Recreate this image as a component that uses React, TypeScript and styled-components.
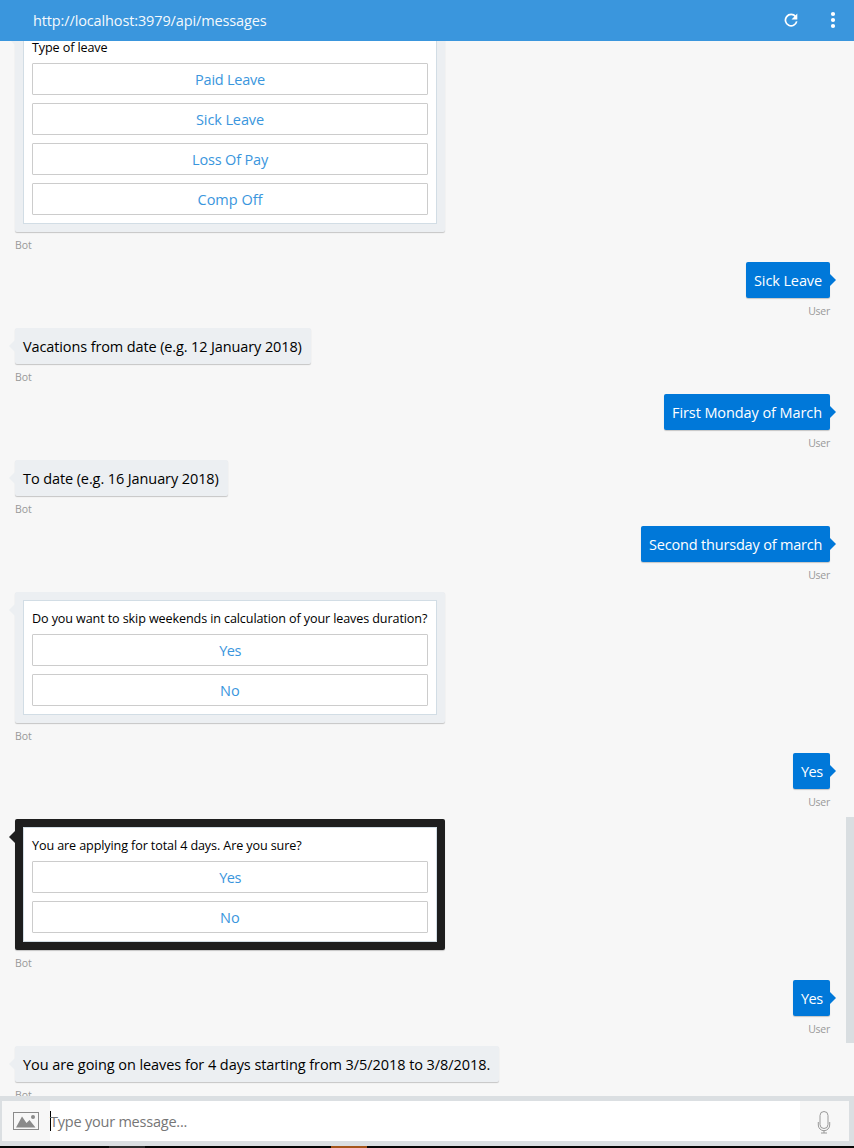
import React from 'react';
import styled, { createGlobalStyle, css } from 'styled-components';

const GlobalStyle = createGlobalStyle`
  * { box-sizing: border-box; }
  body { margin: 0; background: #f7f7f7; }
`;

const Page = styled.div`
  display: flex;
  flex-direction: column;
  height: 1148px;
  overflow: hidden;
  background: #f7f7f7;
  font-family: 'Open Sans', 'Noto Sans', sans-serif;
  font-size: 14.5px;
  color: #000;
`;

const Header = styled.header`
  display: flex;
  flex: 0 0 41px;
  align-items: center;
  padding: 0 16px 2px 33px;
  background: #3a96dd;
  color: #fff;
`;

const Address = styled.div`
  flex: 1;
  padding-top: 2px;
  letter-spacing: -0.126px;
  line-height: 20px;
  opacity: 0.95;
`;

const HeaderButton = styled.button`
  display: flex;
  padding: 0;
  border: 0;
  margin-left: 30px;
  background: none;
  color: inherit;
`;

const Conversation = styled.main`
  display: flex;
  flex: 1;
  min-height: 0;
  overflow: hidden;
`;

const MessageList = styled.div`
  display: flex;
  flex: 1;
  flex-direction: column;
  gap: 12px;
  padding: 0 16px 0 15px;
  margin-top: -20px;
`;

const ScrollTrack = styled.div`
  flex: 0 0 8px;
  padding-top: 776px;
`;

const ScrollThumb = styled.div`
  height: 226px;
  background: #d9dee1;
`;

const Message = styled.div<{ $mine?: boolean }>`
  display: flex;
  flex: none;
  flex-direction: column;
  align-items: ${(p) => (p.$mine ? 'flex-end' : 'flex-start')};
`;

const tones = {
  bot: '#eceff2',
  user: '#0078d9',
  selected: '#1e1e1e',
};

const Bubble = styled.div<{ $tone: keyof typeof tones; $width: number }>`
  position: relative;
  width: ${(p) => p.$width}px;
  padding: 8px;
  border-radius: 2px;
  background: ${(p) => tones[p.$tone]};
  color: ${(p) => (p.$tone === 'user' ? '#fff' : '#000')};
  box-shadow: 0 1px 1px rgba(0, 0, 0, 0.2);

  &::after {
    content: '';
    position: absolute;
    top: 12px;
    border: 6px solid transparent;
    ${(p) =>
      p.$tone === 'user'
        ? css`left: 100%; border-right-width: 0; border-left-color: ${tones.user};`
        : css`right: 100%; border-left-width: 0; border-right-color: ${tones[p.$tone]};`}
  }
`;

const Line = styled.div<{ $spacing: number }>`
  padding-top: 1px;
  line-height: 20px;
  margin-bottom: -1px;
  letter-spacing: ${(p) => p.$spacing}px;
  white-space: nowrap;
`;

const Sender = styled.div<{ $mine?: boolean }>`
  height: 18px;
  padding-top: 5px;
  color: #999;
  font-size: 10.5px;
  letter-spacing: ${(p) => (p.$mine ? -0.25 : -0.05)}px;
  line-height: 16px;
`;

const Card = styled.section`
  display: flex;
  flex-direction: column;
  gap: 8px;
  padding: 8px;
  border: 1px solid #d2dde5;
  background: #fff;
`;

const Question = styled.p`
  padding-top: 1px;
  margin: 0 0 -1px;
  font-size: 12.6px;
  letter-spacing: -0.115px;
  line-height: 17px;
  white-space: nowrap;
`;

const Choice = styled.button<{ $spacing: number }>`
  height: 32px;
  padding: 0;
  border: 1px solid #ccc;
  border-radius: 1px;
  background: #fff;
  color: #3a96dd;
  font: inherit;
  letter-spacing: ${(p) => p.$spacing}px;
`;

const Composer = styled.footer`
  display: flex;
  flex: 0 0 50px;
  border: solid #dbdfe2;
  border-width: 5px 5px 5px 2px;
`;

const ComposerButton = styled.button<{ $width: number }>`
  display: flex;
  flex: 0 0 ${(p) => p.$width}px;
  align-items: center;
  justify-content: center;
  padding: 0;
  border: 0;
  background: #f7f7f7;
`;

const Field = styled.div`
  display: flex;
  flex: 1;
  align-items: center;
  background: #fff;
  color: #767676;
  letter-spacing: -0.22px;
`;

const Caret = styled.span`
  width: 1px;
  height: 20px;
  margin-right: -1px;
  background: #000;
`;

const DesktopEdge = styled.div`
  flex: 0 0 2px;
  background: linear-gradient(
    90deg,
    #050505 109px,
    #2b2b2b 109px 145px,
    #050505 145px 331px,
    #a4551b 331px 367px,
    #080606 367px
  );
`;

type Option = [label: string, spacing: number];
type Entry =
  | { kind: 'text'; from: 'bot' | 'user'; text: string; width: number; spacing: number }
  | { kind: 'card'; text: string; options: Option[]; selected?: boolean };

const yesNo: Option[] = [['Yes', -0.55], ['No', 0.1]];

const entries: Entry[] = [
  {
    kind: 'card',
    text: 'Type of leave',
    options: [['Paid Leave', -0.24], ['Sick Leave', -0.11], ['Loss Of Pay', -0.17], ['Comp Off', 0]],
  },
  { kind: 'text', from: 'user', text: 'Sick Leave', width: 84, spacing: -0.11 },
  { kind: 'text', from: 'bot', text: 'Vacations from date (e.g. 12 January 2018)', width: 295.5, spacing: -0.12 },
  { kind: 'text', from: 'user', text: 'First Monday of March', width: 166, spacing: -0.085 },
  { kind: 'text', from: 'bot', text: 'To date (e.g. 16 January 2018)', width: 212.5, spacing: -0.1 },
  { kind: 'text', from: 'user', text: 'Second thursday of march', width: 189, spacing: -0.18 },
  {
    kind: 'card',
    text: 'Do you want to skip weekends in calculation of your leaves duration?',
    options: yesNo,
  },
  { kind: 'text', from: 'user', text: 'Yes', width: 37, spacing: -0.55 },
  { kind: 'card', text: 'You are applying for total 4 days. Are you sure?', options: yesNo, selected: true },
  { kind: 'text', from: 'user', text: 'Yes', width: 37, spacing: -0.55 },
  {
    kind: 'text',
    from: 'bot',
    text: 'You are going on leaves for 4 days starting from 3/5/2018 to 3/8/2018.',
    width: 483.5,
    spacing: -0.066,
  },
];

function MessageRow({ entry }: { entry: Entry }) {
  if (entry.kind === 'text') {
    const mine = entry.from === 'user';
    return (
      <Message $mine={mine}>
        <Bubble $tone={entry.from} $width={entry.width}>
          <Line $spacing={entry.spacing}>{entry.text}</Line>
        </Bubble>
        <Sender $mine={mine}>{mine ? 'User' : 'Bot'}</Sender>
      </Message>
    );
  }
  return (
    <Message>
      <Bubble $tone={entry.selected ? 'selected' : 'bot'} $width={430}>
        <Card>
          <Question>{entry.text}</Question>
          {entry.options.map(([label, spacing]) => (
            <Choice key={label} $spacing={spacing}>{label}</Choice>
          ))}
        </Card>
      </Bubble>
      <Sender>Bot</Sender>
    </Message>
  );
}

export default function App() {
  return (
    <Page>
      <GlobalStyle />
      <Header>
        <Address>http://localhost:3979/api/messages</Address>
        <HeaderButton aria-label="Refresh">
          <svg width="14" height="14" viewBox="0 0 14 14" fill="none">
            <path d="M11.6 3.6A5.7 5.7 0 1 0 12.7 8.4" stroke="#fff" strokeWidth="1.7" />
            <path d="M13.3 0.6V6.4H7.5Z" fill="#fff" />
          </svg>
        </HeaderButton>
        <HeaderButton aria-label="Menu">
          <svg width="10" height="18" viewBox="0 0 10 18" fill="#fff">
            <circle cx="5" cy="3" r="2.1" />
            <circle cx="5" cy="9" r="2.1" />
            <circle cx="5" cy="15" r="2.1" />
          </svg>
        </HeaderButton>
      </Header>
      <Conversation>
        <MessageList>
          {entries.map((entry, i) => (
            <MessageRow key={i} entry={entry} />
          ))}
        </MessageList>
        <ScrollTrack>
          <ScrollThumb />
        </ScrollTrack>
      </Conversation>
      <Composer>
        <ComposerButton $width={48} aria-label="Attach image">
          <svg width="26" height="18" viewBox="0 0 26 18">
            <rect x="0.5" y="0.5" width="25" height="17" fill="none" stroke="#8a8a8a" />
            <path d="M3 15.5L9 4.5L13.5 11L16.5 8L22.5 15.5Z" fill="#8a8a8a" />
            <circle cx="20" cy="5" r="2" fill="#8a8a8a" />
          </svg>
        </ComposerButton>
        <Field>
          <Caret />
          Type your message...
        </Field>
        <ComposerButton $width={49} aria-label="Speak">
          <svg width="15" height="26" viewBox="0 0 15 26" fill="none" stroke="#999">
            <rect x="3" y="3.5" width="8" height="17" rx="4" />
            <path d="M1.3 14V17A5.7 5.7 0 0 0 12.7 17V14M7 22.5V25M4 25H10" />
          </svg>
        </ComposerButton>
      </Composer>
      <DesktopEdge />
    </Page>
  );
}
